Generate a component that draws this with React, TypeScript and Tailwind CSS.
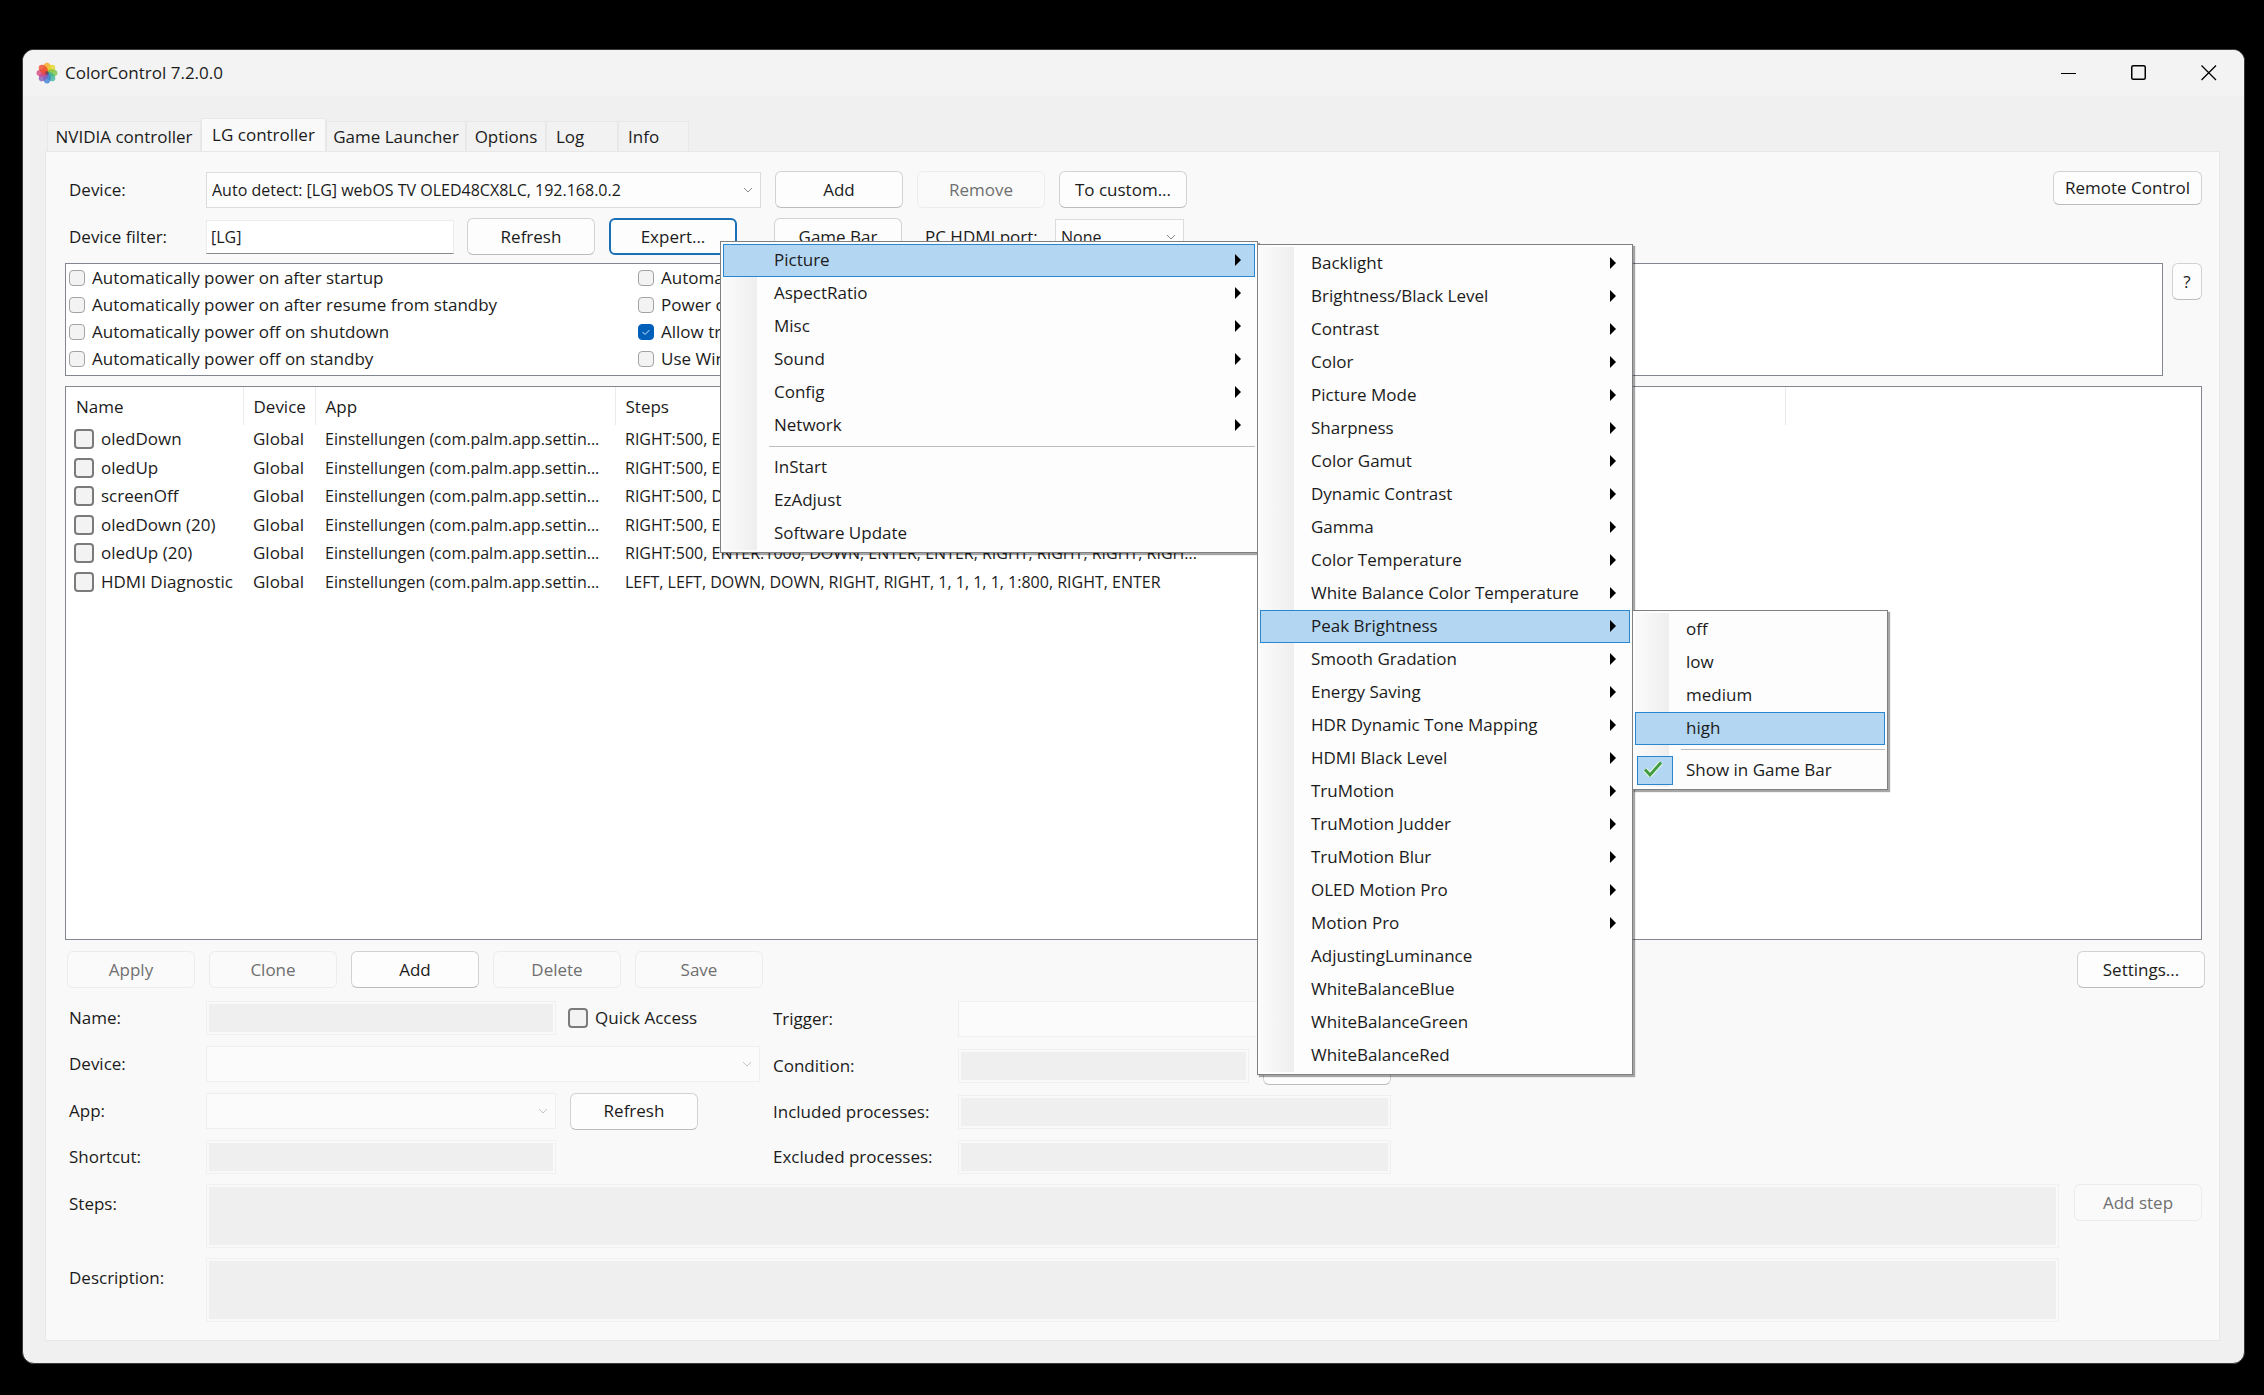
import { useId } from "react";
import type { ReactNode } from "react";

type Entry = {
  label?: string;
  arrow?: boolean;
  active?: boolean;
  checked?: boolean;
  separator?: boolean;
  submenu?: ReactNode;
};

function Button({
  children,
  disabled,
  focused,
  size = "h-[37px] w-32",
}: {
  children?: ReactNode;
  disabled?: boolean;
  focused?: boolean;
  size?: string;
}) {
  const look = disabled
    ? "border border-[#ececec] bg-[#fafafa] text-[#6f6f6f]"
    : focused
      ? "border-2 border-[#1b6fb5] bg-[#fdfdfd]"
      : "border border-[#d2d2d2] border-b-[#bcbcbc] bg-[#fdfdfd]";
  return (
    <button
      type="button"
      disabled={disabled}
      className={`shrink-0 rounded-md text-center whitespace-nowrap ${size} ${look}`}
    >
      {children}
    </button>
  );
}

function Chevron({ className }: { className: string }) {
  return (
    <svg
      viewBox="0 0 10 6"
      className={`pointer-events-none absolute right-2 top-1/2 h-[6px] w-[10px] -translate-y-1/2 ${className}`}
      fill="none"
      stroke="currentColor"
    >
      <path d="M1 1l4 4 4-4" />
    </svg>
  );
}

function Select({
  id,
  value = "",
  disabled,
  width,
}: {
  id: string;
  value?: string;
  disabled?: boolean;
  width: string;
}) {
  const look = disabled ? "border-[#efefef] bg-[#fbfbfb]" : "border-[#dcdcdc] bg-[#fdfdfd]";
  return (
    <div className={`relative h-9 text-[16px] ${width}`}>
      <select
        id={id}
        disabled={disabled}
        className={`h-full w-full appearance-none border pl-[5px] pr-6 ${look}`}
      >
        <option>{value}</option>
      </select>
      <Chevron className={disabled ? "text-[#c4c4c4]" : "text-[#8a8a8a]"} />
    </div>
  );
}

function Checkbox({
  label,
  checked,
  large,
}: {
  label: string;
  checked?: boolean;
  large?: boolean;
}) {
  const size = large ? "size-5 border-2 border-[#7b7b7b]" : "size-4 border border-[#a3a3a3]";
  return (
    <label className="flex items-center gap-[7px] whitespace-nowrap">
      <span className="relative flex shrink-0">
        <input
          type="checkbox"
          defaultChecked={checked}
          className={`appearance-none rounded-[4px] bg-[#f3f3f3] checked:border-[#005fb8] checked:bg-[#005fb8] ${size}`}
        />
        {checked && (
          <svg
            viewBox="0 0 16 16"
            className="pointer-events-none absolute inset-0 size-4"
            fill="none"
            stroke="#cfe4f7"
          >
            <path d="M4.500 8l2.500 2.500 4.500-4.500" />
          </svg>
        )}
      </span>
      {label}
    </label>
  );
}

const disabledField =
  "block border border-[#f0f0f0] bg-[#efefef] bg-clip-content p-[2px] resize-none";

// One line of the preset form: label on the left, controls after it
function Field({
  label,
  labelWidth,
  height,
  children,
}: {
  label: string;
  labelWidth: string;
  height: string;
  children: (id: string) => ReactNode;
}) {
  const id = useId();
  return (
    <div className={`flex items-center ${height}`}>
      <label htmlFor={id} className={`shrink-0 ${labelWidth}`}>
        {label}
      </label>
      {children(id)}
    </div>
  );
}

// Drop-down menu with the shaded gutter on its left
function Menu({ entries, position }: { entries: Entry[]; position: string }) {
  return (
    <ul
      className={`absolute z-10 border border-[#808080] bg-[#fdfdfd] p-[2px] shadow-[2px_2px_1px_rgba(0,0,0,0.35)] ${position}`}
    >
      <li
        aria-hidden
        className="absolute bottom-[2px] left-[2px] top-[2px] w-[34px] bg-linear-to-r from-[#fbfbfb] to-[#eeeeee]"
      />
      {entries.map((entry, i) =>
        entry.separator ? (
          <li key={i} className="relative flex h-[9px] items-center pl-[46px]">
            <hr className="w-full border-[#bdbdbd]" />
          </li>
        ) : (
          <li key={i} className="relative">
            <button
              type="button"
              className={`relative flex h-[33px] w-full items-center justify-between whitespace-nowrap border pb-px pl-[50px] pr-[13px] ${
                entry.active ? "border-[#2a86cf] bg-[#b3d7f3]" : "border-transparent"
              }`}
            >
              {entry.checked && (
                <span className="absolute left-px top-px flex h-[29px] w-9 items-center justify-center border border-[#2a86cf] bg-[#b3d7f3] pb-1 pr-1">
                  <svg viewBox="0 0 20 16" className="h-4 w-5" fill="none">
                    <path d="M2 8.500l5 5.500L18 1.500" stroke="#e4f3e2" strokeWidth="5" />
                    <path d="M2 8.500l5 5.500L18 1.500" stroke="#3f9b3f" strokeWidth="2.800" />
                  </svg>
                </span>
              )}
              {entry.label}
              {entry.arrow && (
                <svg viewBox="0 0 6 12" className="h-3 w-[6px]">
                  <path d="M0 0l6 6-6 6z" fill="#000" />
                </svg>
              )}
            </button>
            {entry.submenu}
          </li>
        ),
      )}
    </ul>
  );
}

const brightnessEntries: Entry[] = [
  { label: "off" },
  { label: "low" },
  { label: "medium" },
  { label: "high", active: true },
  { separator: true },
  { label: "Show in Game Bar", checked: true },
];

const pictureEntries: Entry[] = [
  { label: "Backlight", arrow: true },
  { label: "Brightness/Black Level", arrow: true },
  { label: "Contrast", arrow: true },
  { label: "Color", arrow: true },
  { label: "Picture Mode", arrow: true },
  { label: "Sharpness", arrow: true },
  { label: "Color Gamut", arrow: true },
  { label: "Dynamic Contrast", arrow: true },
  { label: "Gamma", arrow: true },
  { label: "Color Temperature", arrow: true },
  { label: "White Balance Color Temperature", arrow: true },
  {
    label: "Peak Brightness",
    arrow: true,
    active: true,
    submenu: <Menu entries={brightnessEntries} position="left-full top-0 ml-[2px] w-[256px]" />,
  },
  { label: "Smooth Gradation", arrow: true },
  { label: "Energy Saving", arrow: true },
  { label: "HDR Dynamic Tone Mapping", arrow: true },
  { label: "HDMI Black Level", arrow: true },
  { label: "TruMotion", arrow: true },
  { label: "TruMotion Judder", arrow: true },
  { label: "TruMotion Blur", arrow: true },
  { label: "OLED Motion Pro", arrow: true },
  { label: "Motion Pro", arrow: true },
  { label: "AdjustingLuminance" },
  { label: "WhiteBalanceBlue" },
  { label: "WhiteBalanceGreen" },
  { label: "WhiteBalanceRed" },
];

const expertEntries: Entry[] = [
  {
    label: "Picture",
    arrow: true,
    active: true,
    submenu: <Menu entries={pictureEntries} position="left-full top-0 ml-[2px] w-[376px]" />,
  },
  { label: "AspectRatio", arrow: true },
  { label: "Misc", arrow: true },
  { label: "Sound", arrow: true },
  { label: "Config", arrow: true },
  { label: "Network", arrow: true },
  { separator: true },
  { label: "InStart" },
  { label: "EzAdjust" },
  { label: "Software Update" },
];

const tabs = [
  { label: "NVIDIA controller", box: "w-[154px] text-center" },
  { label: "LG controller", box: "w-[125px] text-center", active: true },
  { label: "Game Launcher", box: "w-[140px] text-center" },
  { label: "Options", box: "w-[80px] text-center" },
  { label: "Log", box: "w-[72px] pl-[9px] text-left" },
  { label: "Info", box: "w-[71px] pl-[9px] text-left" },
];

const powerOptions = [
  { label: "Automatically power on after startup" },
  { label: "Automatically power on after resume from standby" },
  { label: "Automatically power off on shutdown" },
  { label: "Automatically power off on standby" },
  { label: "Automatic" },
  { label: "Power off" },
  { label: "Allow triggers", checked: true },
  { label: "Use Windows" },
];

const app = "Einstellungen (com.palm.app.settin...";

const presets = [
  { name: "oledDown", steps: "RIGHT:500, ENTER" },
  { name: "oledUp", steps: "RIGHT:500, ENTER" },
  { name: "screenOff", steps: "RIGHT:500, DOWN" },
  { name: "oledDown (20)", steps: "RIGHT:500, ENTER" },
  {
    name: "oledUp (20)",
    steps: "RIGHT:500, ENTER:1000, DOWN, ENTER, ENTER, RIGHT, RIGHT, RIGHT, RIGH...",
  },
  {
    name: "HDMI Diagnostic",
    steps: "LEFT, LEFT, DOWN, DOWN, RIGHT, RIGHT, 1, 1, 1, 1, 1:800, RIGHT, ENTER",
  },
];

const petals = [
  { color: "#f7a81b", angle: 0 },
  { color: "#e3d52a", angle: 45 },
  { color: "#7cc242", angle: 90 },
  { color: "#3fb59a", angle: 135 },
  { color: "#3c7fd4", angle: 180 },
  { color: "#8a5bb8", angle: 225 },
  { color: "#d8467f", angle: 270 },
  { color: "#ee4a2b", angle: 315 },
];

function AppLogo() {
  return (
    <svg viewBox="0 0 24 24" className="size-[22px]">
      {petals.map((p) => (
        <ellipse
          key={p.angle}
          cx="12"
          cy="6.500"
          rx="4.200"
          ry="6"
          fill={p.color}
          fillOpacity="0.8"
          transform={`rotate(${p.angle} 12 12)`}
        />
      ))}
      <circle cx="12" cy="12" r="2" fill="#3a3f5a" fillOpacity="0.6" />
    </svg>
  );
}

function TitleBar() {
  const control = "flex h-full w-[70px] items-center justify-center";
  return (
    <header className="flex h-[46px] items-center justify-between bg-[#f3f3f3] pl-[13px]">
      <div className="flex items-center gap-[7px]">
        <AppLogo />
        <h1>ColorControl 7.2.0.0</h1>
      </div>
      <div className="flex h-full">
        <button type="button" aria-label="Minimize" className={control}>
          <svg viewBox="0 0 16 16" className="size-4" stroke="#000">
            <path d="M0 8.500h15" />
          </svg>
        </button>
        <button type="button" aria-label="Maximize" className={control}>
          <svg viewBox="0 0 16 16" className="size-4" stroke="#000" strokeWidth="1.500" fill="none">
            <rect x="0.750" y="0.750" width="13.500" height="13.500" rx="1.500" />
          </svg>
        </button>
        <button type="button" aria-label="Close" className={control}>
          <svg viewBox="0 0 16 16" className="size-4" stroke="#000" strokeWidth="1.300">
            <path d="M0.500 0.500l14.500 14.500M15 0.500L0.500 15" />
          </svg>
        </button>
      </div>
    </header>
  );
}

function TopRows() {
  const deviceId = useId();
  const filterId = useId();
  const portId = useId();
  return (
    <div className="flex items-start justify-between">
      <div className="flex flex-col gap-[10px]">
        <div className="flex items-center">
          <label htmlFor={deviceId} className="w-[141px] shrink-0 pl-1">
            Device:
          </label>
          <Select
            id={deviceId}
            value="Auto detect: [LG] webOS TV OLED48CX8LC, 192.168.0.2"
            width="w-[555px]"
          />
          <div className="ml-[14px] flex gap-[14px]">
            <Button>Add</Button>
            <Button disabled>Remove</Button>
            <Button>To custom...</Button>
          </div>
        </div>
        <div className="flex items-center">
          <label htmlFor={filterId} className="w-[141px] shrink-0 pl-1">
            Device filter:
          </label>
          <input
            id={filterId}
            defaultValue="[LG]"
            className="h-[34px] w-[248px] border border-[#ececec] border-b-[#8a8a8a] bg-white px-1 text-[16px]"
          />
          <div className="ml-[13px] flex gap-[14px]">
            <Button>Refresh</Button>
            <div className="relative">
              <Button focused>Expert...</Button>
              <Menu entries={expertEntries} position="left-[111px] top-[23px] w-[538px]" />
            </div>
          </div>
          <div className="ml-[37px] flex items-center">
            <Button>Game Bar</Button>
            <label htmlFor={portId} className="w-[153px] pl-[23px]">
              PC HDMI port:
            </label>
            <Select id={portId} value="None" width="w-[129px]" />
          </div>
        </div>
      </div>
      <Button size="h-[34px] w-[149px]">Remote Control</Button>
    </div>
  );
}

function PresetTable() {
  return (
    <div className="mt-[10px] flex-1 border border-[#82878f] bg-white">
      <table className="w-full table-fixed text-left">
        <colgroup>
          <col className="w-[177px]" />
          <col className="w-[72px]" />
          <col className="w-[300px]" />
          <col className="w-[600px]" />
          <col className="w-[570px]" />
          <col />
        </colgroup>
        <thead>
          <tr className="h-[38px]">
            {["Name", "Device", "App", "Steps", ""].map((title) => (
              <th key={title} className="border-r border-[#ebebeb] pl-[10px] pt-[2px] font-normal">
                {title}
              </th>
            ))}
            <th />
          </tr>
        </thead>
        <tbody>
          {presets.map((preset) => (
            <tr key={preset.name} className="whitespace-nowrap odd:h-[28px] even:h-[29px]">
              <td className="pl-2">
                <Checkbox label={preset.name} large />
              </td>
              <td className="pl-[10px]">Global</td>
              <td className="pl-[10px] text-[16px]">{app}</td>
              <td className="pl-[10px] text-[16px]">{preset.steps}</td>
              <td />
              <td />
            </tr>
          ))}
        </tbody>
      </table>
    </div>
  );
}

function PresetForm() {
  const stepsId = useId();
  const descriptionId = useId();
  return (
    <form className="mt-[13px] flex flex-col gap-[10px] pr-[3px]">
      <div className="flex gap-[13px] pl-1">
        <div className="flex w-[691px] flex-col gap-[11px]">
          <Field label="Name:" labelWidth="w-[137px]" height="h-[34px]">
            {(id) => (
              <>
                <input id={id} disabled className={`${disabledField} mr-3 h-[34px] w-[350px]`} />
                <Checkbox label="Quick Access" large />
              </>
            )}
          </Field>
          <Field label="Device:" labelWidth="w-[137px]" height="h-9">
            {(id) => <Select id={id} disabled width="w-[555px]" />}
          </Field>
          <Field label="App:" labelWidth="w-[137px]" height="h-9">
            {(id) => (
              <div className="flex items-center gap-[14px]">
                <Select id={id} disabled width="w-[350px]" />
                <Button>Refresh</Button>
              </div>
            )}
          </Field>
          <Field label="Shortcut:" labelWidth="w-[137px]" height="h-[34px]">
            {(id) => <input id={id} disabled className={`${disabledField} h-[34px] w-[350px]`} />}
          </Field>
        </div>
        <div className="flex flex-col gap-[11px]">
          <Field label="Trigger:" labelWidth="w-[185px]" height="h-9">
            {(id) => <Select id={id} disabled width="w-[433px]" />}
          </Field>
          <Field label="Condition:" labelWidth="w-[185px]" height="h-9">
            {(id) => (
              <>
                <input id={id} disabled className={`${disabledField} mr-[14px] h-[34px] w-[291px]`} />
                <Button />
              </>
            )}
          </Field>
          <Field label="Included processes:" labelWidth="w-[185px]" height="h-[34px]">
            {(id) => <input id={id} disabled className={`${disabledField} h-[34px] w-[433px]`} />}
          </Field>
          <Field label="Excluded processes:" labelWidth="w-[185px]" height="h-[34px]">
            {(id) => <input id={id} disabled className={`${disabledField} h-[34px] w-[433px]`} />}
          </Field>
        </div>
      </div>
      <div className="flex items-start">
        <label htmlFor={stepsId} className="w-[141px] pl-1 pt-2">
          Steps:
        </label>
        <textarea id={stepsId} disabled className={`${disabledField} mr-[15px] h-16 flex-1`} />
        <Button disabled>Add step</Button>
      </div>
      <div className="flex items-start">
        <label htmlFor={descriptionId} className="w-[141px] pl-1 pt-2">
          Description:
        </label>
        <textarea
          id={descriptionId}
          disabled
          className={`${disabledField} mr-[143px] h-16 flex-1`}
        />
      </div>
    </form>
  );
}

export default function App() {
  return (
    <div className="flex min-h-screen bg-black pb-[31px] pl-[22px] pr-[19px] pt-[49px] font-['Open_Sans',sans-serif] text-[17px] leading-6 text-[#1b1b1b]">
      <div className="flex flex-1 flex-col overflow-hidden rounded-xl border border-[#3a3a3a] bg-[#f0f0f0]">
        <TitleBar />
        <nav className="mt-[22px] flex items-end pl-6">
          {tabs.map((tab) => (
            <button
              key={tab.label}
              type="button"
              className={`border border-b-0 border-[#e8e8e8] whitespace-nowrap ${tab.box} ${
                tab.active ? "h-[33px] bg-[#f9f9f9]" : "h-[30px] bg-[#f2f2f2] pt-px"
              }`}
            >
              {tab.label}
            </button>
          ))}
        </nav>
        <main className="mb-[22px] ml-[22px] mr-[24px] flex flex-1 flex-col border border-[#e8e8e8] bg-[#f9f9f9] pb-[18px] pl-[19px] pr-[14px] pt-[19px]">
          <div className="flex flex-1 flex-col pr-[3px]">
            <TopRows />
            <div className="mt-2 flex items-start gap-[9px]">
              <div className="grid flex-1 grid-flow-col grid-cols-[569px_1fr] grid-rows-[repeat(4,27px)] border border-[#82878f] bg-white pb-[3px] pl-[3px]">
                {powerOptions.map((option) => (
                  <Checkbox key={option.label} {...option} />
                ))}
              </div>
              <Button size="h-[37px] w-[30px]">?</Button>
            </div>
            <PresetTable />
          </div>
          <div className="mt-[11px] flex justify-between">
            <div className="flex gap-[14px] pl-[2px]">
              <Button disabled>Apply</Button>
              <Button disabled>Clone</Button>
              <Button>Add</Button>
              <Button disabled>Delete</Button>
              <Button disabled>Save</Button>
            </div>
            <Button>Settings...</Button>
          </div>
          <PresetForm />
        </main>
      </div>
    </div>
  );
}
